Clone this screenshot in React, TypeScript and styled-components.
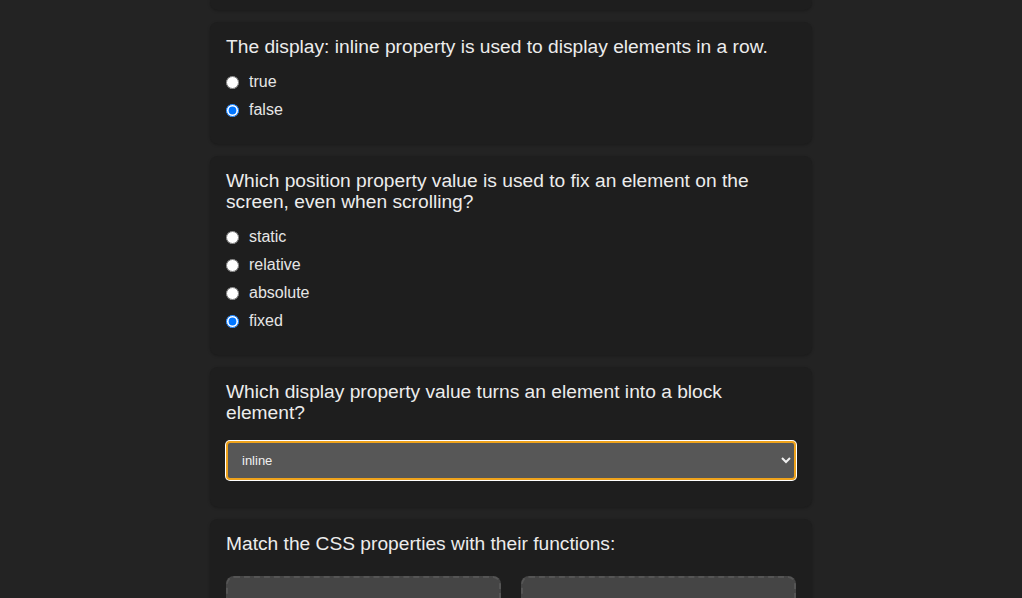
import styled, { createGlobalStyle } from 'styled-components';

const GlobalStyle = createGlobalStyle`
    html, body {
        margin: 0;
        padding: 0;
        background-color: #232323;
        font-family: 'Liberation Sans', Arial, sans-serif;
        color: #e6e6e6;
    }
`;

const Quiz = styled.main`
    display: flex;
    flex-direction: column;
    gap: 12px;
    width: 602px;
    margin: 0 auto;
`;

const Card = styled.section<{ $tail?: boolean }>`
    background-color: #1e1e1e;
    border-radius: ${(props) => (props.$tail ? '0 0 8px 8px' : '8px')};
    padding: ${(props) => (props.$tail ? '0' : '14px 16px 16px')};
    height: ${(props) => (props.$tail ? '10px' : 'auto')};
    box-shadow: 0 1px 3px rgba(0, 0, 0, 0.25);
`;

const Question = styled.p`
    margin: 0 0 15px;
    font-size: 19.2px;
    line-height: 21px;
    color: #ececec;
`;

const Option = styled.label`
    display: flex;
    align-items: center;
    height: 20px;
    margin-bottom: 8px;
    font-size: 16px;
    color: #e6e6e6;
`;

const Radio = styled.input`
    width: 13px;
    height: 13px;
    margin: 0 10px 0 0;
`;

const Select = styled.select`
    display: block;
    width: 100%;
    height: 39px;
    margin: 18px 0 11px;
    padding: 0 10px;
    background-color: #575757;
    color: #f0f0f0;
    font-family: 'Liberation Sans', Arial, sans-serif;
    font-size: 13px;
    border: 2px solid #eea21b;
    border-radius: 4px;
    outline: none;
    box-shadow: 0 0 0 1px #ffffff;
    color-scheme: dark;
`;

const Pairs = styled.div`
    display: grid;
    grid-template-columns: 1fr 1fr;
    gap: 20px;
    margin-top: 22px;
`;

const DropZone = styled.div`
    height: 120px;
    background-color: #454545;
    border: 2px dashed #555555;
    border-radius: 8px;
`;

const radioQuestions = [
    {
        name: 'inline',
        text: 'The display: inline property is used to display elements in a row.',
        options: ['true', 'false'],
        answer: 'false',
    },
    {
        name: 'position',
        text: 'Which position property value is used to fix an element on the screen, even when scrolling?',
        options: ['static', 'relative', 'absolute', 'fixed'],
        answer: 'fixed',
    },
];

function App() {
    return (
        <>
            <GlobalStyle />
            <Quiz>
                <Card $tail />
                {radioQuestions.map((q) => (
                    <Card key={q.name}>
                        <Question>{q.text}</Question>
                        {q.options.map((opt) => (
                            <Option key={opt}>
                                <Radio type="radio" name={q.name} value={opt} defaultChecked={opt === q.answer} />
                                {opt}
                            </Option>
                        ))}
                    </Card>
                ))}
                <Card>
                    <Question>Which display property value turns an element into a block element?</Question>
                    <Select defaultValue="inline">
                        <option value="inline">inline</option>
                        <option value="block">block</option>
                        <option value="inline-block">inline-block</option>
                        <option value="flex">flex</option>
                    </Select>
                </Card>
                <Card>
                    <Question>Match the CSS properties with their functions:</Question>
                    <Pairs>
                        <DropZone />
                        <DropZone />
                    </Pairs>
                </Card>
            </Quiz>
        </>
    );
}

export default App;
